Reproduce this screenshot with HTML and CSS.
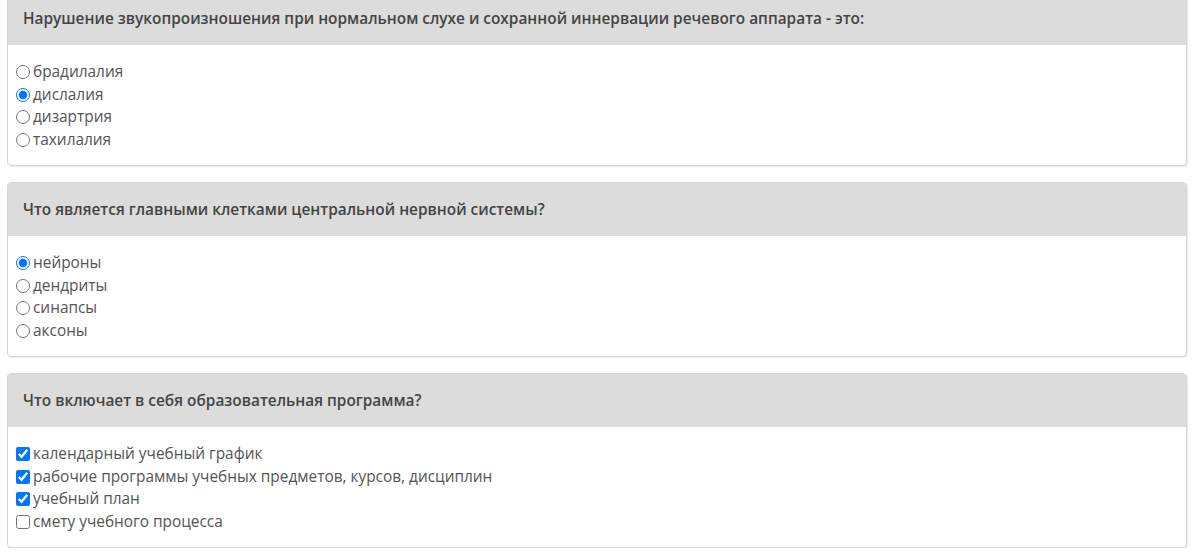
FILE: index.html
```html
<!DOCTYPE html>
<html lang="ru">
<head>
<meta charset="utf-8">
<title>Тест</title>
<link rel="stylesheet" href="styles.css">
</head>
<body>
<div class="page">
  <div class="card">
    <div class="card-head">Нарушение звукопроизношения при нормальном слухе и сохранной иннервации речевого аппарата - это:</div>
    <div class="card-body">
      <label class="opt"><input type="radio" name="q1">брадилалия</label>
      <label class="opt"><input type="radio" name="q1" checked>дислалия</label>
      <label class="opt"><input type="radio" name="q1">дизартрия</label>
      <label class="opt"><input type="radio" name="q1">тахилалия</label>
    </div>
  </div>
  <div class="card">
    <div class="card-head">Что является главными клетками центральной нервной системы?</div>
    <div class="card-body">
      <label class="opt"><input type="radio" name="q2" checked>нейроны</label>
      <label class="opt"><input type="radio" name="q2">дендриты</label>
      <label class="opt"><input type="radio" name="q2">синапсы</label>
      <label class="opt"><input type="radio" name="q2">аксоны</label>
    </div>
  </div>
  <div class="card">
    <div class="card-head">Что включает в себя образовательная программа?</div>
    <div class="card-body">
      <label class="opt"><input type="checkbox" checked>календарный учебный график</label>
      <label class="opt"><input type="checkbox" checked>рабочие программы учебных предметов, курсов, дисциплин</label>
      <label class="opt"><input type="checkbox" checked>учебный план</label>
      <label class="opt"><input type="checkbox">смету учебного процесса</label>
    </div>
  </div>
</div>
</body>
</html>
```
FILE: styles.css
```css
html, body {
  margin: 0;
  padding: 0;
  background: #fff;
}
body {
  font-family: "Open Sans", "Liberation Sans", sans-serif;
  color: #555;
  overflow: hidden;
}
.page {
  margin: -9px 13px 0 7px;
  display: flex;
  flex-direction: column;
  gap: 16px;
}
.card {
  border: 1px solid #d6d6d6;
  border-radius: 4px;
  box-shadow: 1px 1px 1px rgba(0,0,0,0.08);
  overflow: hidden;
  background: #fff;
}
.card-head {
  background: #dcdcdc;
  color: #444;
  font-weight: 600;
  font-size: 15.4px;
  line-height: 22px;
  padding: 16px 15px 15px;
}
.card-body {
  padding: 16px 8px 14px 3px;
  display: flex;
  flex-direction: column;
}
.opt {
  font-size: 15.4px;
  line-height: 22.5px;
  color: #555;
  display: flex;
  align-items: center;
}
.opt input {
  margin: 0 3px 0 5px;
  width: 14px;
  height: 14px;
}
```
